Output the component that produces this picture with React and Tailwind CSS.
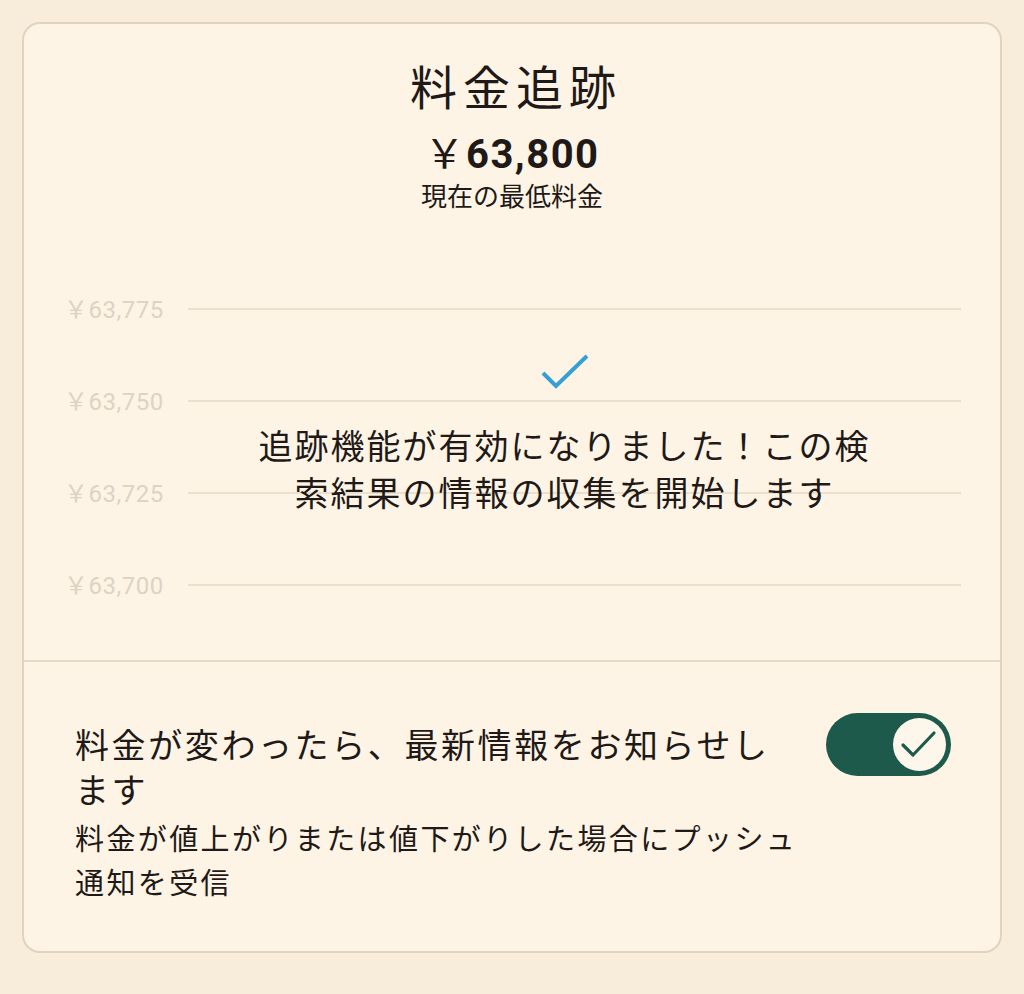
import React from 'react';

const cjk = { fontFamily: '"Noto Sans CJK JP", "Noto Sans", sans-serif' };
const latin = { fontFamily: 'Roboto, "Noto Sans", sans-serif' };

const levels = ['63,775', '63,750', '63,725', '63,700'];

const Yen = ({ value, className }) => (
  <span className={className}>
    <span style={cjk} className="font-normal">￥</span>
    <span style={latin}>{value}</span>
  </span>
);

const Toggle = () => (
  <div className="flex h-[63px] w-[125px] shrink-0 items-center justify-end rounded-full bg-[#1d5a4b] pr-[5px]">
    <div className="flex h-[53px] w-[53px] items-center justify-center rounded-full bg-[#fdf6ea]">
      <svg width="53" height="53" viewBox="0 0 53 53" fill="none">
        <path d="M10 27 L20 37 L41 15" stroke="#1d5a4b" strokeWidth="3.2" strokeLinecap="round" strokeLinejoin="round" />
      </svg>
    </div>
  </div>
);

export default function App() {
  return (
    <div className="min-h-screen bg-[#f8ecdb] px-[22px] pt-[22px] pb-[42px] text-[#1f1a17]" style={cjk}>
      <div className="overflow-hidden rounded-[18px] border-2 border-[#e0d3bf] bg-[#fdf4e6]">
        {/* header */}
        <div className="pt-[33px] text-center">
          <h1 className="pl-[8px] text-[47px] leading-[56px] tracking-[6px] font-normal">料金追跡</h1>
          <div className="mt-[16px] text-[40px] leading-[44px] font-bold tracking-[1.5px]">
            <Yen value="63,800" />
          </div>
          <p className="mt-[3px] text-[26px] leading-[30px]">現在の最低料金</p>
        </div>

        {/* chart */}
        <div className="relative mt-[53px] pl-[40px] pr-[39px]">
          {levels.map((v) => (
            <div key={v} className="flex h-[92px] items-center">
              <Yen value={v} className="w-[124px] text-[24px] tracking-[0.5px] text-[#ddd3c4]" />
              <div className="h-[2px] flex-1 bg-[#ebdfcd]" />
            </div>
          ))}
          <div className="absolute inset-y-0 left-[144px] right-[39px] flex flex-col items-center pt-[91px]">
            <svg width="48" height="36" viewBox="0 0 48 36" fill="none">
              <path d="M2 19 L15 32 L46 2" stroke="#37a0d2" strokeWidth="4" />
            </svg>
            <p className="mt-[31px] text-center text-[34px] leading-[47px] tracking-[2px]">
              追跡機能が有効になりました！この検
              <br />
              索結果の情報の収集を開始します
            </p>
          </div>
        </div>

        <div className="mt-[29px] h-[2px] bg-[#e6dac8]" />

        {/* notification setting */}
        <div className="flex items-start justify-between pt-[51px] pb-[48px] pl-[51px] pr-[49px]">
          <div className="mt-[8px] w-[760px]">
            <p className="text-[34px] leading-[45px] tracking-[2.6px]">
              料金が変わったら、最新情報をお知らせし
              <br />
              ます
            </p>
            <p className="mt-[4px] text-[29px] leading-[44px] tracking-[2.4px]">
              料金が値上がりまたは値下がりした場合にプッシュ
              <br />
              通知を受信
            </p>
          </div>
          <Toggle />
        </div>
      </div>
    </div>
  );
}
